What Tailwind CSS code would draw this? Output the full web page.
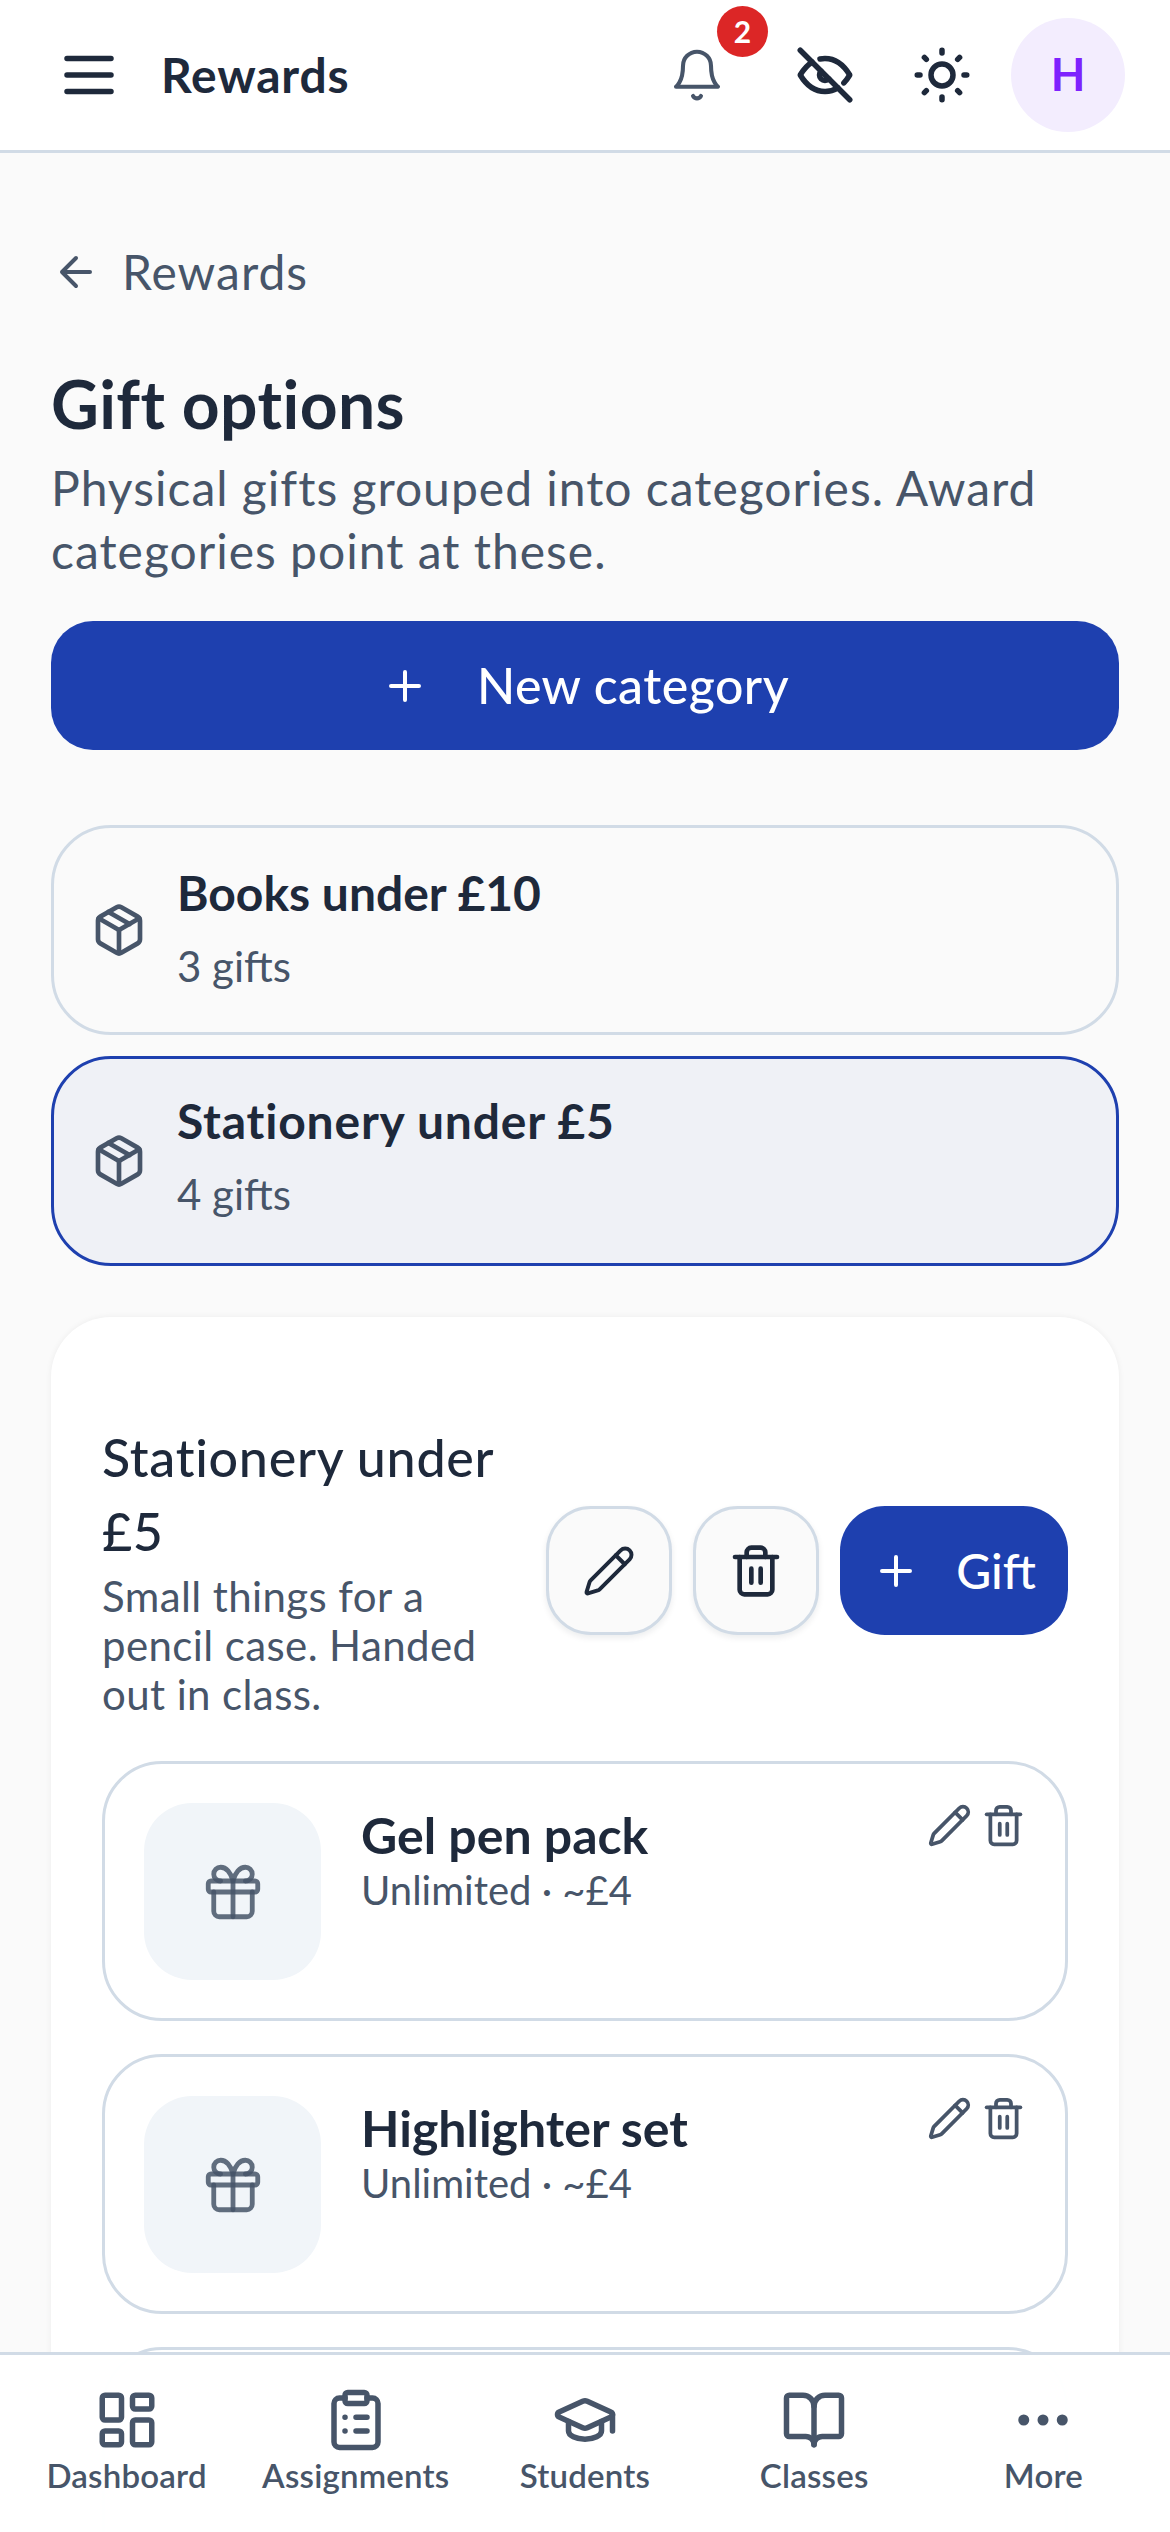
<!DOCTYPE html>
<html lang="en">
<head>
    <meta charset="UTF-8">
    <meta name="viewport" content="width=device-width, initial-scale=1.0">
    <title>Gift options</title>
    <script src="https://cdn.jsdelivr.net/npm/@tailwindcss/browser@4"></script>
</head>
<body class="bg-[#fafafa] font-['Lato',sans-serif] text-[#1e293b] h-[2532px] w-[1170px] overflow-hidden relative">
    <!-- Top bar -->
    <header class="h-[153px] bg-white border-b-[3px] border-[#d1dbe6] flex items-center pl-[56px] pr-[45px]">
        <svg class="w-[66px] h-[66px]" viewBox="0 0 24 24" fill="none" stroke="currentColor" stroke-width="2" stroke-linecap="round" stroke-linejoin="round"><path d="M4 6h16M4 12h16M4 18h16"/></svg>
        <span class="ml-[39px] text-[48px] font-bold leading-none tracking-[0.8px]">Rewards</span>
        <div class="ml-auto flex items-center">
            <div class="relative w-[60px] h-[60px] text-[#475569] flex items-center justify-center">
                <svg class="w-[56px] h-[56px]" viewBox="0 0 24 24" fill="none" stroke="currentColor" stroke-width="1.75" stroke-linecap="round" stroke-linejoin="round"><path d="M6 8a6 6 0 0 1 12 0c0 7 3 9 3 9H3s3-2 3-9"/><path d="M10.3 21a1.94 1.94 0 0 0 3.4 0"/></svg>
                <span class="absolute -top-[39px] left-[50px] w-[51px] h-[51px] rounded-full bg-[#dc2626] text-white text-[30px] font-bold flex items-center justify-center">2</span>
            </div>
            <svg class="ml-[65px] w-[66px] h-[66px]" viewBox="0 0 24 24" fill="none" stroke="currentColor" stroke-width="2" stroke-linecap="round" stroke-linejoin="round"><path d="M10.585 10.587a2 2 0 0 0 2.829 2.828"/><path d="M16.681 16.673a8.717 8.717 0 0 1-4.681 1.327c-3.6 0-6.6-2-9-6 1.272-2.12 2.712-3.678 4.32-4.674m2.86-1.146a9.055 9.055 0 0 1 1.82-.18c3.6 0 6.6 2 9 6-.666 1.11-1.379 2.067-2.138 2.87"/><path d="M3 3l18 18"/></svg>
            <svg class="ml-[51px] w-[66px] h-[66px]" viewBox="0 0 24 24" fill="none" stroke="currentColor" stroke-width="2" stroke-linecap="round" stroke-linejoin="round"><circle cx="12" cy="12" r="4"/><path d="M3 12h1m8-9v1m8 8h1m-9 8v1M5.6 5.6l.7.7m12.1-.7l-.7.7m0 11.4l.7.7m-12.1-.7l-.7.7"/></svg>
            <div class="ml-[36px] w-[114px] h-[114px] rounded-full bg-[#f3edfe] text-[#7e22fe] text-[45px] font-bold flex items-center justify-center">H</div>
        </div>
    </header>

    <main class="px-[51px]">
        <!-- Back link -->
        <div class="mt-[87px] h-[63px] flex items-center text-[#475569]">
            <svg class="w-[48px] h-[48px] ml-[1px]" viewBox="0 0 24 24" fill="none" stroke="currentColor" stroke-width="2" stroke-linecap="round" stroke-linejoin="round"><path d="M19 12H5M12 19l-7-7 7-7"/></svg>
            <span class="ml-[22px] text-[48px] leading-none tracking-[1px]">Rewards</span>
        </div>

        <h1 class="mt-[60px] text-[66px] leading-[81px] font-bold tracking-[0.4px]">Gift options</h1>
        <p class="mt-[12px] text-[48px] leading-[63px] tracking-[1px] text-[#475569] w-[1040px]">Physical gifts grouped into categories. Award categories point at these.</p>

        <button class="mt-[39px] w-full h-[129px] rounded-[42px] bg-[#1e40af] text-white text-[50px] font-medium tracking-[0.5px] flex items-center justify-center">
            <svg class="w-[48px] h-[48px]" viewBox="0 0 24 24" fill="none" stroke="currentColor" stroke-width="2" stroke-linecap="round"><path d="M5 12h14M12 5v14"/></svg>
            <span class="ml-[48px]">New category</span>
        </button>

        <!-- Categories -->
        <div class="mt-[75px] flex flex-col gap-[21px]">
            <div class="h-[210px] rounded-[60px] border-[3px] border-[#d1dbe6] flex items-center pl-[37px]">
                <svg class="w-[56px] h-[56px] text-[#475569] shrink-0" viewBox="0 0 24 24" fill="none" stroke="currentColor" stroke-width="2" stroke-linecap="round" stroke-linejoin="round"><path d="M11 21.73a2 2 0 0 0 2 0l7-4A2 2 0 0 0 21 16V8a2 2 0 0 0-1-1.73l-7-4a2 2 0 0 0-2 0l-7 4A2 2 0 0 0 3 8v8a2 2 0 0 0 1 1.73z"/><path d="M12 22V12"/><path d="M3.29 7 12 12l8.71-5"/><path d="m7.5 4.27 9 5.15"/></svg>
                <div class="ml-[30px] mb-[8px]">
                    <div class="text-[48px] leading-[66px] font-bold">Books under £10</div>
                    <div class="mt-[13px] text-[42px] leading-[54px] text-[#475569]">3 gifts</div>
                </div>
            </div>
            <div class="h-[210px] rounded-[60px] border-[3px] border-[#1e40af] bg-[#eff1f6] flex items-center pl-[37px]">
                <svg class="w-[56px] h-[56px] text-[#475569] shrink-0" viewBox="0 0 24 24" fill="none" stroke="currentColor" stroke-width="2" stroke-linecap="round" stroke-linejoin="round"><path d="M11 21.73a2 2 0 0 0 2 0l7-4A2 2 0 0 0 21 16V8a2 2 0 0 0-1-1.73l-7-4a2 2 0 0 0-2 0l-7 4A2 2 0 0 0 3 8v8a2 2 0 0 0 1 1.73z"/><path d="M12 22V12"/><path d="M3.29 7 12 12l8.71-5"/><path d="m7.5 4.27 9 5.15"/></svg>
                <div class="ml-[30px] mb-[13px]">
                    <div class="text-[48px] leading-[66px] font-bold tracking-[0.8px]">Stationery under £5</div>
                    <div class="mt-[13px] text-[42px] leading-[54px] text-[#475569]">4 gifts</div>
                </div>
            </div>
        </div>

        <!-- Selected category -->
        <section class="mt-[51px] bg-white rounded-[60px] shadow-[0_0_6px_rgba(15,23,42,0.06)] px-[51px] pt-[103px]">
            <div class="flex items-start">
                <div class="w-[420px] shrink-0">
                    <h2 class="text-[52px] leading-[74px] font-medium tracking-[0.7px]">Stationery under £5</h2>
                    <p class="mt-[4px] text-[42px] leading-[49px] tracking-[0.4px] text-[#475569]">Small things for a pencil case. Handed out in class.</p>
                </div>
                <div class="ml-auto mt-[86px] flex gap-[21px]">
                    <button class="w-[126px] h-[129px] rounded-[45px] bg-[#fafafa] border-[3px] border-[#d1dbe6] shadow-[0_3px_6px_rgba(15,23,42,0.08)] flex items-center justify-center">
                        <svg class="w-[54px] h-[54px]" viewBox="0 0 24 24" fill="none" stroke="currentColor" stroke-width="1.75" stroke-linecap="round" stroke-linejoin="round"><path d="M21.174 6.812a1 1 0 0 0-3.986-3.987L3.842 16.174a2 2 0 0 0-.5.83l-1.321 4.352a.5.5 0 0 0 .623.622l4.353-1.32a2 2 0 0 0 .83-.497z"/><path d="m15 5 4 4"/></svg>
                    </button>
                    <button class="w-[126px] h-[129px] rounded-[45px] bg-[#fafafa] border-[3px] border-[#d1dbe6] shadow-[0_3px_6px_rgba(15,23,42,0.08)] flex items-center justify-center">
                        <svg class="w-[56px] h-[56px]" viewBox="0 0 24 24" fill="none" stroke="currentColor" stroke-width="2" stroke-linecap="round" stroke-linejoin="round"><path d="M3 6h18"/><path d="M19 6v14a2 2 0 0 1-2 2H7a2 2 0 0 1-2-2V6"/><path d="M8 6V4a2 2 0 0 1 2-2h4a2 2 0 0 1 2 2v2"/><path d="M10 11v6M14 11v6"/></svg>
                    </button>
                    <button class="w-[228px] h-[129px] rounded-[45px] bg-[#1e40af] text-white text-[48px] font-medium flex items-center justify-center">
                        <svg class="w-[48px] h-[48px]" viewBox="0 0 24 24" fill="none" stroke="currentColor" stroke-width="2" stroke-linecap="round"><path d="M5 12h14M12 5v14"/></svg>
                        <span class="ml-[36px]">Gift</span>
                    </button>
                </div>
            </div>

            <!-- Gifts -->
            <div class="mt-[42px] flex flex-col gap-[33px]">
                <div class="h-[260px] rounded-[60px] border-[3px] border-[#d1dbe6] flex items-start pl-[39px] pt-[39px] pr-[39px]">
                    <div class="w-[177px] h-[177px] rounded-[48px] bg-[#f1f5f9] flex items-center justify-center text-[#475569]">
                        <svg class="w-[66px] h-[66px]" viewBox="0 0 24 24" fill="none" stroke="currentColor" stroke-width="1.75" stroke-opacity="0.85" stroke-linecap="round" stroke-linejoin="round"><rect x="3" y="8" width="18" height="4" rx="1"/><path d="M12 8v13"/><path d="M19 12v7a2 2 0 0 1-2 2H7a2 2 0 0 1-2-2v-7"/><path d="M7.5 8a2.5 2.5 0 0 1 0-5A4.8 8 0 0 1 12 8a4.8 8 0 0 1 4.5-5 2.5 2.5 0 0 1 0 5"/></svg>
                    </div>
                    <div class="ml-[40px] mt-[2px]">
                        <div class="text-[50px] leading-[60px] font-bold">Gel pen pack</div>
                        <div class="text-[40px] leading-[51px] text-[#475569]">Unlimited · ~£4</div>
                    </div>
                    <div class="ml-auto flex gap-[9px] text-[#475569]">
                        <svg class="w-[45px] h-[45px]" viewBox="0 0 24 24" fill="none" stroke="currentColor" stroke-width="2" stroke-linecap="round" stroke-linejoin="round"><path d="M21.174 6.812a1 1 0 0 0-3.986-3.987L3.842 16.174a2 2 0 0 0-.5.83l-1.321 4.352a.5.5 0 0 0 .623.622l4.353-1.32a2 2 0 0 0 .83-.497z"/><path d="m15 5 4 4"/></svg>
                        <svg class="w-[45px] h-[45px]" viewBox="0 0 24 24" fill="none" stroke="currentColor" stroke-width="2" stroke-linecap="round" stroke-linejoin="round"><path d="M3 6h18"/><path d="M19 6v14a2 2 0 0 1-2 2H7a2 2 0 0 1-2-2V6"/><path d="M8 6V4a2 2 0 0 1 2-2h4a2 2 0 0 1 2 2v2"/><path d="M10 11v6M14 11v6"/></svg>
                    </div>
                </div>
                <div class="h-[260px] rounded-[60px] border-[3px] border-[#d1dbe6] flex items-start pl-[39px] pt-[39px] pr-[39px]">
                    <div class="w-[177px] h-[177px] rounded-[48px] bg-[#f1f5f9] flex items-center justify-center text-[#475569]">
                        <svg class="w-[66px] h-[66px]" viewBox="0 0 24 24" fill="none" stroke="currentColor" stroke-width="1.75" stroke-opacity="0.85" stroke-linecap="round" stroke-linejoin="round"><rect x="3" y="8" width="18" height="4" rx="1"/><path d="M12 8v13"/><path d="M19 12v7a2 2 0 0 1-2 2H7a2 2 0 0 1-2-2v-7"/><path d="M7.5 8a2.5 2.5 0 0 1 0-5A4.8 8 0 0 1 12 8a4.8 8 0 0 1 4.5-5 2.5 2.5 0 0 1 0 5"/></svg>
                    </div>
                    <div class="ml-[40px] mt-[2px]">
                        <div class="text-[50px] leading-[60px] font-bold">Highlighter set</div>
                        <div class="text-[40px] leading-[51px] text-[#475569]">Unlimited · ~£4</div>
                    </div>
                    <div class="ml-auto flex gap-[9px] text-[#475569]">
                        <svg class="w-[45px] h-[45px]" viewBox="0 0 24 24" fill="none" stroke="currentColor" stroke-width="2" stroke-linecap="round" stroke-linejoin="round"><path d="M21.174 6.812a1 1 0 0 0-3.986-3.987L3.842 16.174a2 2 0 0 0-.5.83l-1.321 4.352a.5.5 0 0 0 .623.622l4.353-1.32a2 2 0 0 0 .83-.497z"/><path d="m15 5 4 4"/></svg>
                        <svg class="w-[45px] h-[45px]" viewBox="0 0 24 24" fill="none" stroke="currentColor" stroke-width="2" stroke-linecap="round" stroke-linejoin="round"><path d="M3 6h18"/><path d="M19 6v14a2 2 0 0 1-2 2H7a2 2 0 0 1-2-2V6"/><path d="M8 6V4a2 2 0 0 1 2-2h4a2 2 0 0 1 2 2v2"/><path d="M10 11v6M14 11v6"/></svg>
                    </div>
                </div>
                <div class="h-[260px] rounded-[60px] border-[3px] border-[#d1dbe6]"></div>
            </div>
        </section>
    </main>

    <!-- Bottom tabs -->
    <nav class="absolute left-0 right-0 bottom-0 h-[180px] bg-white/98 border-t-[3px] border-[#d1dbe6] px-[12px] grid grid-cols-5 text-[#475569] text-[33px] font-semibold tracking-[0.2px]">
        <div class="flex flex-col items-center pt-[32px]">
            <svg class="w-[66px] h-[66px]" viewBox="0 0 24 24" fill="none" stroke="currentColor" stroke-width="2" stroke-linecap="round" stroke-linejoin="round"><rect x="3" y="3" width="7" height="9" rx="1"/><rect x="14" y="3" width="7" height="5" rx="1"/><rect x="14" y="12" width="7" height="9" rx="1"/><rect x="3" y="16" width="7" height="5" rx="1"/></svg>
            <span class="mt-[1px] leading-[42px]">Dashboard</span>
        </div>
        <div class="flex flex-col items-center pt-[32px]">
            <svg class="w-[66px] h-[66px]" viewBox="0 0 24 24" fill="none" stroke="currentColor" stroke-width="2" stroke-linecap="round" stroke-linejoin="round"><rect x="8" y="2" width="8" height="4" rx="1"/><path d="M16 4h2a2 2 0 0 1 2 2v14a2 2 0 0 1-2 2H6a2 2 0 0 1-2-2V6a2 2 0 0 1 2-2h2"/><path d="M12 11h4M12 16h4M8 11h.01M8 16h.01"/></svg>
            <span class="mt-[1px] leading-[42px]">Assignments</span>
        </div>
        <div class="flex flex-col items-center pt-[32px]">
            <svg class="w-[66px] h-[66px]" viewBox="0 0 24 24" fill="none" stroke="currentColor" stroke-width="2" stroke-linecap="round" stroke-linejoin="round"><path d="M21.42 10.922a1 1 0 0 0-.019-1.838L12.83 5.18a2 2 0 0 0-1.66 0L2.6 9.08a1 1 0 0 0 0 1.832l8.57 3.908a2 2 0 0 0 1.66 0z"/><path d="M22 10v6"/><path d="M6 12.5V16a6 3 0 0 0 12 0v-3.5"/></svg>
            <span class="mt-[1px] leading-[42px]">Students</span>
        </div>
        <div class="flex flex-col items-center pt-[32px]">
            <svg class="w-[66px] h-[66px]" viewBox="0 0 24 24" fill="none" stroke="currentColor" stroke-width="2" stroke-linecap="round" stroke-linejoin="round"><path d="M12 7v14"/><path d="M3 18a1 1 0 0 1-1-1V4a1 1 0 0 1 1-1h5a4 4 0 0 1 4 4 4 4 0 0 1 4-4h5a1 1 0 0 1 1 1v13a1 1 0 0 1-1 1h-6a3 3 0 0 0-3 3 3 3 0 0 0-3-3z"/></svg>
            <span class="mt-[1px] leading-[42px]">Classes</span>
        </div>
        <div class="flex flex-col items-center pt-[32px]">
            <svg class="w-[66px] h-[66px]" viewBox="0 0 24 24" fill="currentColor"><circle cx="5" cy="12" r="2"/><circle cx="12" cy="12" r="2"/><circle cx="19" cy="12" r="2"/></svg>
            <span class="mt-[1px] leading-[42px]">More</span>
        </div>
    </nav>
</body>
</html>
